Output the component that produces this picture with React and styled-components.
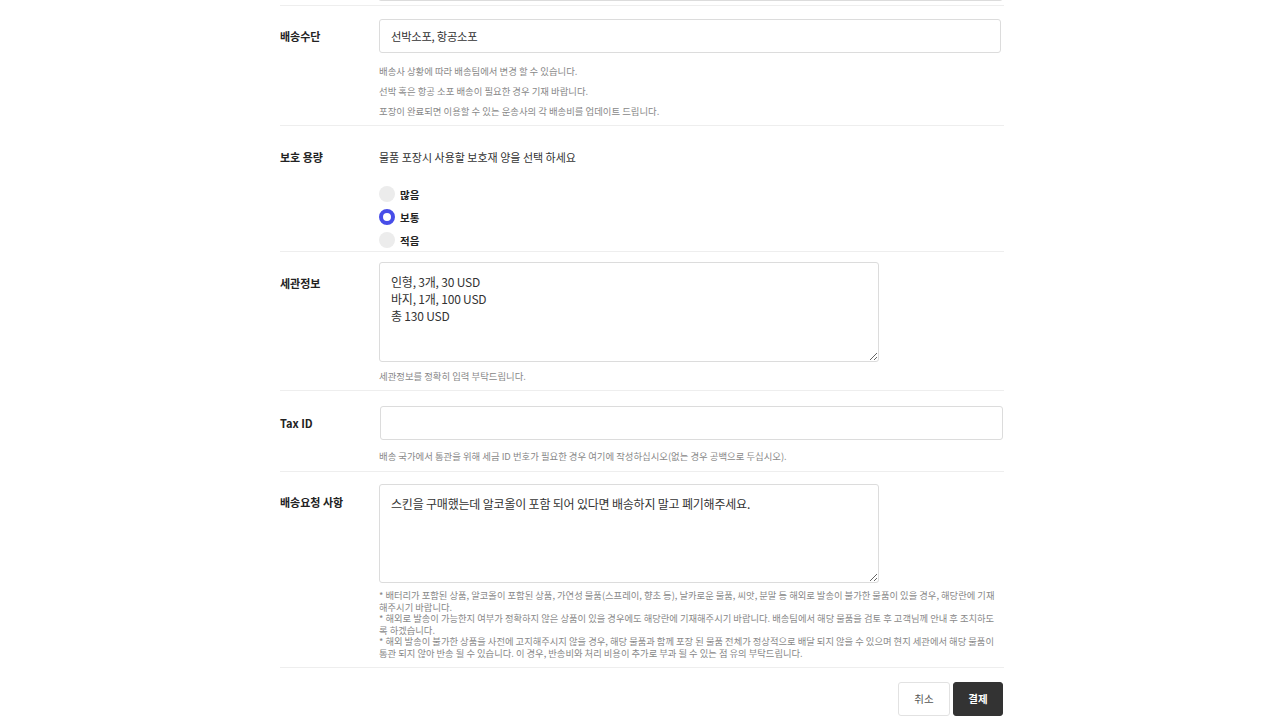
import React from 'react';
import styled, { createGlobalStyle } from 'styled-components';

const GlobalStyle = createGlobalStyle`
  html, body {
    margin: 0;
    background: #fff;
    overflow: hidden;
  }
  body {
    font-family: "Noto Sans CJK KR", "Noto Sans", sans-serif;
    color: #222;
  }
`;

// scrolled page: the previous field sits partly above the viewport
const Page = styled.div`
  display: flex;
  justify-content: center;
  padding-left: 4px;
  margin-top: -47px;
`;

const Form = styled.div`
  width: 724px;
`;

const Row = styled.div`
  display: grid;
  grid-template-columns: 99px 1fr;
  padding: ${p => p.$pt}px 0 ${p => p.$pb}px;
  border-bottom: 1px solid #eee;
`;

const Label = styled.div`
  font-size: 11px;
  font-weight: 700;
  color: #222;
  line-height: ${p => p.$lh || 34}px;
  margin-top: ${p => p.$top || 0}px;
`;

const Field = styled.div`
  display: flex;
  flex-direction: column;
  min-width: 0;
`;

const TextInput = styled.input`
  box-sizing: border-box;
  width: ${p => p.$w || 622}px;
  margin-left: ${p => p.$ml || 0}px;
  height: 34px;
  padding: 0 11px;
  border: 1px solid #dcdcdc;
  border-radius: 3px;
  font-family: inherit;
  font-size: 11.3px;
  letter-spacing: -0.25px;
  color: #333;
  outline: none;
`;

const TextArea = styled.textarea`
  box-sizing: border-box;
  width: 500px;
  height: ${p => p.$h}px;
  padding: ${p => p.$pad}px 11px;
  border: 1px solid #dcdcdc;
  border-radius: 3px;
  font-family: inherit;
  font-size: 12px;
  line-height: 17px;
  letter-spacing: -0.2px;
  color: #333;
  outline: none;
  resize: vertical;
  display: block;
`;

const Help = styled.div`
  margin-top: ${p => p.$mt}px;
  max-width: ${p => (p.$maxw ? `${p.$maxw}px` : 'none')};
  font-size: ${p => p.$fs || 9.4}px;
  line-height: ${p => p.$lh || 20}px;
  color: #888;
`;

const Desc = styled.div`
  font-size: 11px;
  line-height: 18px;
  color: #333;
`;

const RadioList = styled.div`
  display: flex;
  flex-direction: column;
  gap: 7px;
  margin-top: 20px;
`;

const RadioItem = styled.label`
  display: flex;
  align-items: center;
  gap: 5px;
  height: 16px;
  font-size: 10.5px;
  font-weight: 700;
  color: #222;
  cursor: pointer;
`;

const RadioDot = styled.span`
  box-sizing: border-box;
  width: 16px;
  height: 16px;
  border-radius: 50%;
  background: ${p => (p.$on ? '#fff' : '#ececec')};
  border: ${p => (p.$on ? '4px solid #474de8' : 'none')};
  flex-shrink: 0;
`;

const Actions = styled.div`
  display: flex;
  justify-content: flex-end;
  gap: 3px;
  padding-top: 14px;
  padding-right: 1px;
`;

const Button = styled.button`
  box-sizing: border-box;
  width: ${p => p.$w}px;
  height: 34px;
  border-radius: 3px;
  font-family: inherit;
  font-size: 10.5px;
  cursor: pointer;
  border: 1px solid ${p => (p.$dark ? '#333' : '#e2e2e2')};
  background: ${p => (p.$dark ? '#333' : '#fff')};
  color: ${p => (p.$dark ? '#fff' : '#555')};
  font-weight: ${p => (p.$dark ? 700 : 400)};
`;

const protectOptions = [
  { key: 'many', label: '많음' },
  { key: 'normal', label: '보통' },
  { key: 'few', label: '적음' },
];

const requestNotes = [
  '* 배터리가 포함된 상품, 알코올이 포함된 상품, 가연성 물품(스프레이, 향초 등), 날카로운 물품, 씨앗, 분말 등 해외로 발송이 불가한 물품이 있을 경우, 해당란에 기재해주시기 바랍니다.',
  '* 해외로 발송이 가능한지 여부가 정확하지 않은 상품이 있을 경우에도 해당란에 기재해주시기 바랍니다. 배송팀에서 해당 물품을 검토 후 고객님께 안내 후 조치하도록 하겠습니다.',
  '* 해외 발송이 불가한 상품을 사전에 고지해주시지 않을 경우, 해당 물품과 함께 포장 된 물품 전체가 정상적으로 배달 되지 않을 수 있으며 현지 세관에서 해당 물품이 통관 되지 않아 반송 될 수 있습니다. 이 경우, 반송비와 처리 비용이 추가로 부과 될 수 있는 점 유의 부탁드립니다.',
];

export default function App() {
  const [protect, setProtect] = React.useState('normal');

  return (
    <>
      <GlobalStyle />
      <Page>
        <Form>
          {/* previous field, scrolled mostly out of view */}
          <Row $pt={14} $pb={4}>
            <Label />
            <Field>
              <TextInput $w={625} $ml={-1} defaultValue="" />
            </Field>
          </Row>

          <Row $pt={13} $pb={4}>
            <Label>배송수단</Label>
            <Field>
              <TextInput defaultValue="선박소포, 항공소포" />
              <Help $mt={8}>
                <div>배송사 상황에 따라 배송팀에서 변경 할 수 있습니다.</div>
                <div>선박 혹은 항공 소포 배송이 필요한 경우 기재 바랍니다.</div>
                <div>포장이 완료되면 이용할 수 있는 운송사의 각 배송비를 업데이트 드립니다.</div>
              </Help>
            </Field>
          </Row>

          <Row $pt={22} $pb={3}>
            <Label $lh={18}>보호 용량</Label>
            <Field>
              <Desc>물품 포장시 사용할 보호재 양을 선택 하세요</Desc>
              <RadioList>
                {protectOptions.map(opt => (
                  <RadioItem key={opt.key} onClick={() => setProtect(opt.key)}>
                    <RadioDot $on={protect === opt.key} />
                    {opt.label}
                  </RadioItem>
                ))}
              </RadioList>
            </Field>
          </Row>

          <Row $pt={10} $pb={4}>
            <Label $top={4}>세관정보</Label>
            <Field>
              <TextArea $h={100} $pad={10} defaultValue={'인형, 3개, 30 USD\n바지, 1개, 100 USD\n총 130 USD'} />
              <Help $mt={4}>세관정보를 정확히 입력 부탁드립니다.</Help>
            </Field>
          </Row>

          <Row $pt={15} $pb={5}>
            <Label>Tax ID</Label>
            <Field>
              <TextInput $w={623} $ml={1} defaultValue="" />
              <Help $mt={6}>
                배송 국가에서 통관을 위해 세금 ID 번호가 필요한 경우 여기에 작성하십시오(없는 경우 공백으로 두십시오).
              </Help>
            </Field>
          </Row>

          <Row $pt={12} $pb={7}>
            <Label $top={1}>배송요청 사항</Label>
            <Field>
              <TextArea $h={99} $pad={10} defaultValue="스킨을 구매했는데 알코올이 포함 되어 있다면 배송하지 말고 폐기해주세요." />
              <Help $mt={7} $lh={11.6} $fs={9.3} $maxw={619}>
                {requestNotes.map((note, i) => (
                  <div key={i}>{note}</div>
                ))}
              </Help>
            </Field>
          </Row>

          <Actions>
            <Button $w={52}>취소</Button>
            <Button $w={50} $dark>결제</Button>
          </Actions>
        </Form>
      </Page>
    </>
  );
}
